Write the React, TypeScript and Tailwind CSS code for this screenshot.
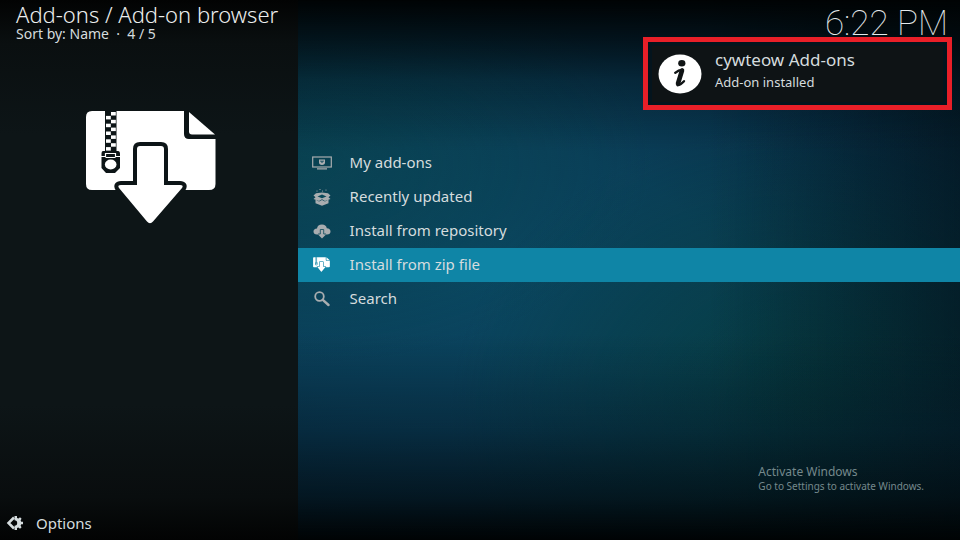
import type { ReactNode } from "react";
import clsx from "clsx";

type MenuItem = {
  label: string;
  icon: ReactNode;
  active?: boolean;
};

function ZipIcon({ className, ink }: { className: string; ink: string }) {
  const arrow =
    "M51 39Q51 36 54 36H75Q78 36 78 39V75H94Q98 75 96 78L67 111.500Q64 115 61 111.500L33 78Q31 75 35 75H51Z";
  const teeth = [0, 1, 2, 3, 4, 5, 6, 7, 8, 9];

  return (
    <svg viewBox="0 0 130 116" className={className} aria-hidden="true">
      <path
        fill="currentColor"
        d="M6 1H98V24Q98 29 103 29H129.500V74Q129.500 80 123 80H6Q0 80 0 74V7Q0 1 6 1Z"
      />
      <path fill="currentColor" d="M103 2L129 24.500H106Q103 24.500 103 21.500Z" />
      <rect x="19" y="0" width="11.500" height="43" fill={ink} />
      {teeth.map((n) => (
        <rect
          key={n}
          x={n % 2 ? 20 : 25}
          y={2 + n * 3.9}
          width="4.800"
          height="3.500"
          fill="currentColor"
        />
      ))}
      <path fill={ink} d="M17 41H32Q34 41 34 44V58L29 63H20L15.500 58V44Q15.500 41 17 41Z" />
      <path stroke="currentColor" strokeWidth="1.200" fill="none" d="M15 46.500H19.500V43.500H29.500V46.500H34M19.500 47.500H29.500" />
      <ellipse cx="24.700" cy="54.500" rx="5.800" ry="5" fill="currentColor" />
      <path d={arrow} fill={ink} stroke={ink} strokeWidth="8" strokeLinejoin="round" />
      <path d={arrow} fill="currentColor" />
    </svg>
  );
}

function ScreenIcon() {
  return (
    <svg viewBox="0 0 20 16" className="h-4 w-5" aria-hidden="true">
      <rect x="0.700" y="2" width="18.600" height="10" fill="none" stroke="currentColor" strokeWidth="1.200" />
      <path fill="currentColor" d="M5 13.200H15V14.600H5ZM7 4.500H13V7.500Q13 9.800 10 10Q7 9.800 7 7.500Z" />
      <path stroke="#0a4859" strokeWidth="1" fill="none" d="M9 5.500V7H11V5.500" />
    </svg>
  );
}

function BoxIcon() {
  return (
    <svg viewBox="0 0 18 18" className="h-[18px] w-[18px]" aria-hidden="true">
      <g fill="currentColor">
        <path d="M9 4.500L15 5.200L17.500 7.500L15.500 9.200L17.500 11L12 13L9 11.200L6 13L0.500 11L2.500 9.200L0.500 7.500L3 5.200Z" />
        <path d="M2.500 11.500L6 13.500L9 12L12 13.500L15.500 11.500V15.200L9 17.800L2.500 15.200Z" />
        <circle cx="4" cy="3" r="0.600" />
        <circle cx="7" cy="1.500" r="0.600" />
        <circle cx="9.500" cy="3" r="0.600" />
        <circle cx="13" cy="2" r="0.600" />
      </g>
      <path fill="#0a4859" d="M9 6.500L13.500 8.600L9 10.200L4.500 8.600Z" />
    </svg>
  );
}

function CloudIcon() {
  return (
    <svg viewBox="0 0 18 16" className="h-4 w-[18px]" aria-hidden="true">
      <path
        fill="currentColor"
        d="M4 11.500Q0.500 11.300 0.500 8.500Q0.500 5.800 4 5.500Q4.500 1.500 9 1.500Q13 1.500 13.800 5.200Q17.500 5.500 17.500 8.500Q17.500 11.300 14 11.500H13L9 15.500L5 11.500Z"
      />
      <path stroke="#0a4859" strokeWidth="0.800" fill="none" d="M5 11H7.300V6.500H10.700V11H13" />
    </svg>
  );
}

function SearchIcon() {
  return (
    <svg viewBox="0 0 16 16" className="size-4" fill="none" stroke="currentColor" aria-hidden="true">
      <circle cx="5.500" cy="5.500" r="4.300" strokeWidth="1.800" />
      <path d="M8.800 8.800L14.500 14" strokeWidth="2.400" strokeLinecap="round" />
    </svg>
  );
}

function InfoIcon() {
  return (
    <svg viewBox="0 0 44 40" className="h-10 w-11 shrink-0" aria-hidden="true">
      <ellipse cx="22" cy="20" rx="21.500" ry="19.500" fill="#fff" />
      <ellipse cx="23.800" cy="9.200" rx="3.600" ry="3.200" fill="#101415" />
      <g fill="none" stroke="#101415" strokeLinecap="round" strokeLinejoin="round">
        <path d="M24 16.500L20 29.500" strokeWidth="4.600" />
        <path d="M17.200 18.800Q20.500 16 24.500 15.700M19.500 31.200Q22.500 31 26 27.200" strokeWidth="2.400" />
      </g>
    </svg>
  );
}

function OptionsIcon() {
  return (
    <svg viewBox="0 0 18 16" className="h-4 w-[18px]" aria-hidden="true">
      <path d="M8 2.500L2.500 8L8 13.500" fill="none" stroke="currentColor" strokeWidth="2.500" />
      <path
        fill="currentColor"
        d="M8.500 1H11V3L12.500 3.500L14 2.200L15.600 3.800L14.600 5.300L15.200 6.800H17V9.200H15.200L14.600 10.700L15.600 12.200L14 13.800L12.500 12.500L11 13V15H8.500V10.700A2.700 2.700 0 0 0 8.500 5.300Z"
      />
    </svg>
  );
}

const items: MenuItem[] = [
  { label: "My add-ons", icon: <ScreenIcon /> },
  { label: "Recently updated", icon: <BoxIcon /> },
  { label: "Install from repository", icon: <CloudIcon /> },
  {
    label: "Install from zip file",
    icon: <ZipIcon className="h-[15px] w-[17px]" ink="#0f85a6" />,
    active: true,
  },
  { label: "Search", icon: <SearchIcon /> },
];

export default function App() {
  return (
    <div className="relative flex min-h-screen bg-[#04202c] font-['Noto_Sans',sans-serif] text-[#d5dcde]">
      <aside className="flex w-[31%] shrink-0 flex-col bg-[linear-gradient(180deg,#020303_0%,#0a0f10_8%,#0d1517_25%,#0d1517_75%,#090d0e_92%,#020303_100%)]">
        <header className="px-4 pt-0.5 whitespace-nowrap">
          <h1 className="text-[22px] leading-6 font-light text-[#eceeee]">
            Add-ons / Add-on browser
          </h1>
          <p className="text-sm leading-4">Sort by: Name &nbsp;·&nbsp; 4 / 5</p>
        </header>
        <div className="mt-[68px] flex justify-center pl-1 text-white">
          <ZipIcon className="h-[116px] w-[130px]" ink="#0d1517" />
        </div>
        <footer className="mt-auto px-1.5 pb-[7px]">
          <button className="flex items-center gap-3 text-[15px] leading-5">
            <OptionsIcon />
            Options
          </button>
        </footer>
      </aside>

      <main className="flex min-w-0 flex-1 flex-col bg-[linear-gradient(180deg,#000304_0%,#000304aa_7%,#00030444_15%,#00030400_28%,#04182600_62%,#04182677_80%,#020c12bb_92%,#000304_100%),linear-gradient(90deg,#020d1400_62%,#020d1488_100%),radial-gradient(ellipse_at_78%_76%,#043f38aa_0%,#043f3800_50%),radial-gradient(ellipse_at_0%_30%,#07484866_0%,#07484800_38%),radial-gradient(ellipse_at_26%_52%,#0a4661_0%,#0a3f59_35%,#072f47_68%,#06222f_100%)]">
        <div className="flex justify-end px-3 pt-1.5">
          <time className="font-['Roboto',sans-serif] text-[35px] leading-9 font-thin text-[#e6eaec]">
            6:22 PM
          </time>
        </div>
        <nav className="mt-26">
          <ul>
            {items.map((item) => (
              <li key={item.label}>
                <button
                  className={clsx(
                    "flex h-[34px] w-full items-center gap-4 px-3 pb-0.5 text-left text-[15px]",
                    item.active && "bg-[#0f85a6]"
                  )}>
                  <span
                    className={clsx(
                      "flex w-6 justify-center pt-px",
                      item.active ? "text-white" : "text-[#a9adb0]"
                    )}>
                    {item.icon}
                  </span>
                  {item.label}
                </button>
              </li>
            ))}
          </ul>
        </nav>
      </main>

      <div
        role="status"
        className="absolute top-[37px] right-2 flex w-[309px] border-[5px] border-[#e81f28] bg-[#04141d] px-1 pt-1 pb-[3px]">
        <div className="flex flex-1 items-center gap-3 bg-[#0e1315] px-1.5 py-1">
          <InfoIcon />
          <div className="pb-1 pl-px">
            <p className="text-[17px] leading-5">cywteow Add-ons</p>
            <p className="text-[13px] leading-6">Add-on installed</p>
          </div>
        </div>
      </div>

      <div className="absolute right-9 bottom-12 text-[#75898c]">
        <p className="text-xs leading-4">Activate Windows</p>
        <p className="text-[10px] leading-3">Go to Settings to activate Windows.</p>
      </div>
    </div>
  );
}
